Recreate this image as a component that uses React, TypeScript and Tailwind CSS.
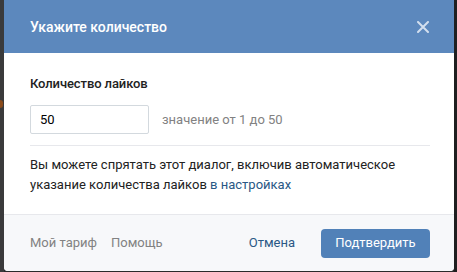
import React from "react";

export default function App() {
  return (
    <div
      className="w-[457px] h-[272px] bg-[#2a2a2b] flex overflow-hidden"
      style={{ fontFamily: "Roboto, 'Open Sans', Arial, sans-serif" }}
    >
      <div className="w-[4px] h-full bg-[#3a3a3b] relative">
        <div className="absolute left-0 top-[100px] w-[3px] h-[8px] rounded-r-full bg-[#8a4a1a]" />
      </div>
      <div className="w-[450px] h-[271px] flex flex-col bg-white rounded-b-[4px] overflow-hidden">
        <div className="h-[53px] bg-[#5c88bd] flex items-center justify-between pl-[26px] pr-[25px]">
          <span className="text-white text-[14px] font-medium leading-[18px]">
            Укажите количество
          </span>
          <svg width="12" height="12" viewBox="0 0 12 12" className="text-[#d3dfee]">
            <path d="M1 1L11 11M11 1L1 11" stroke="currentColor" strokeWidth="2" strokeLinecap="round" />
          </svg>
        </div>
        <div className="flex flex-col px-[26px] pt-[22px] pb-[19px]">
          <div className="text-[13px] leading-[18px] font-medium text-[#222] tracking-[-0.1px]">
            Количество лайков
          </div>
          <div className="flex items-center mt-[12px]">
            <div className="w-[119px] h-[29px] border border-[#d3d9de] rounded-[2px] flex items-center pl-[9px] text-[13px] text-[#000]">
              50
            </div>
            <span className="ml-[13px] text-[13px] text-[#828282]">значение от 1 до 50</span>
          </div>
          <div className="mt-[11px] h-px bg-[#e7e8ec] mr-[-2px]" />
          <p className="mt-[9px] text-[13px] leading-[20px] text-[#222]">
            Вы можете спрятать этот диалог, включив автоматическое
            <br />
            указание количества лайков <span className="text-[#2a5885]">в настройках</span>
          </p>
        </div>
        <div className="flex-1 border-t border-[#e7e8ec] bg-[#f7f8fa] flex items-center pl-[26px] pr-[24px]">
          <span className="text-[13px] text-[#828282]">Мой тариф</span>
          <span className="ml-[14px] text-[13px] text-[#828282]">Помощь</span>
          <span className="ml-auto text-[13px] text-[#2a5885]">Отмена</span>
          <div className="ml-[26px] w-[109px] h-[29px] rounded-[4px] bg-[#5181b8] flex items-center justify-center text-white text-[13px]">
            Подтвердить
          </div>
        </div>
      </div>
      <div className="flex-1 h-full bg-[#1f1f20]" />
    </div>
  );
}
